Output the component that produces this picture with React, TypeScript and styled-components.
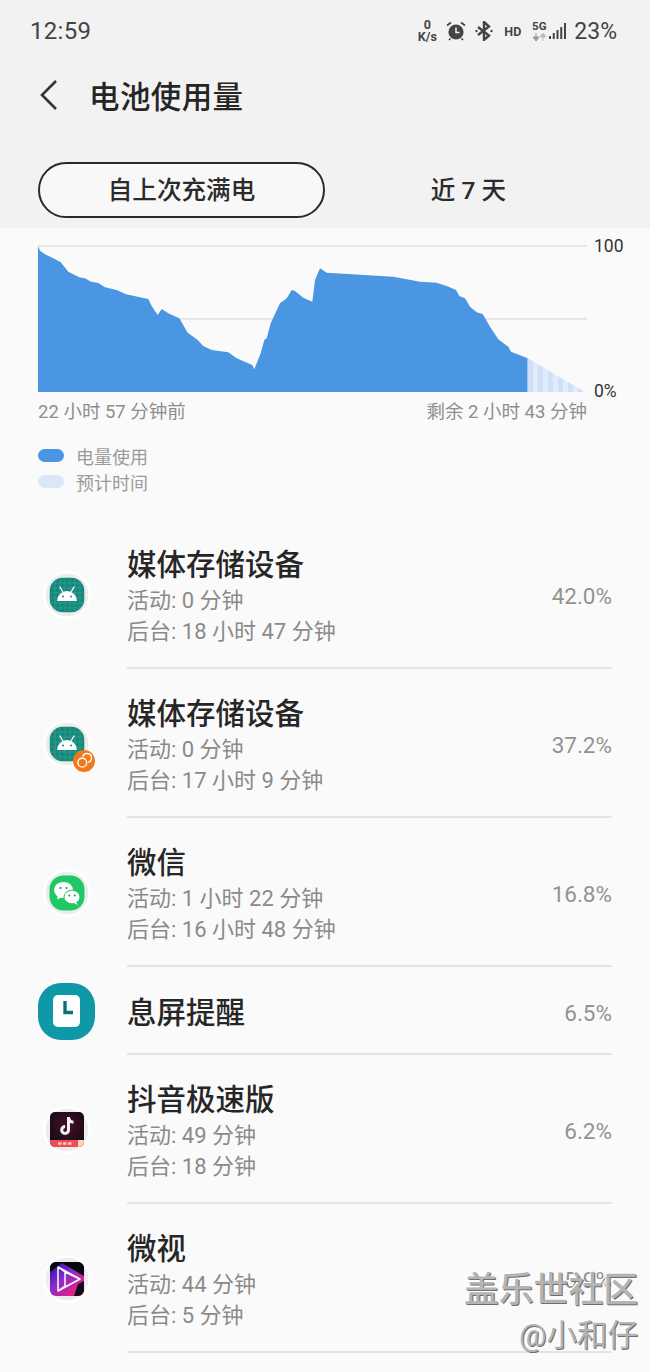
import React from 'react';
import styled, { createGlobalStyle } from 'styled-components';

const FONT = '"Roboto", "Noto Sans CJK SC", sans-serif';

const GlobalStyle = createGlobalStyle`
  html, body {
    margin: 0;
    padding: 0;
    background: #fafafa;
  }
  body {
    font-family: ${FONT};
  }
`;

const Page = styled.div`
  position: relative;
  width: 650px;
  height: 1372px;
  overflow: hidden;
  background: #fafafa;
`;

const Header = styled.header`
  height: 228px;
  background: #f2f2f2;
  display: flex;
  flex-direction: column;
`;

const StatusBar = styled.div`
  height: 62px;
  padding: 0 33px 0 30px;
  display: flex;
  align-items: center;
  justify-content: space-between;
  color: #444;
`;

const Clock = styled.span`
  font-size: 24px;
  letter-spacing: 0.3px;
`;

const StatusIcons = styled.div`
  display: flex;
  align-items: center;
`;

const Speed = styled.div`
  width: 22px;
  margin-right: 8px;
  font-size: 12.5px;
  line-height: 12.5px;
  font-weight: 700;
  text-align: center;
`;

const Alarm = styled.svg`
  width: 20px;
  height: 20px;
  margin-right: 8px;
`;

const Bluetooth = styled.svg`
  width: 20px;
  height: 20px;
`;

const HdLabel = styled.span`
  margin: 0 10px;
  font-size: 12.5px;
  font-weight: 700;
`;

const Network = styled.div`
  width: 16px;
  margin-right: 2px;
  font-size: 11.5px;
  line-height: 11.5px;
  font-weight: 700;
  display: flex;
  flex-direction: column;
  align-items: center;
`;

const Signal = styled.svg`
  width: 17px;
  height: 16px;
`;

const Battery = styled.span`
  margin-left: 8px;
  font-size: 23px;
`;

const TitleRow = styled.div`
  height: 68px;
  padding: 0 0 2px 38px;
  box-sizing: border-box;
  display: flex;
  align-items: center;
`;

const BackIcon = styled.svg`
  width: 24px;
  height: 34px;
`;

const Title = styled.h1`
  margin: 0 0 0 27px;
  font-size: 30.5px;
  font-weight: 500;
  letter-spacing: 0.4px;
  color: #252525;
`;

const Tabs = styled.div`
  margin-top: 32px;
  padding-left: 38px;
  display: flex;
`;

const Tab = styled.div<{ $active?: boolean }>`
  width: 287px;
  height: 56px;
  box-sizing: border-box;
  padding-bottom: 5px;
  border: 2px solid ${props => (props.$active ? '#2a2a2a' : 'transparent')};
  border-radius: 28px;
  background: ${props => (props.$active ? '#f8f8f8' : 'transparent')};
  color: #2b2b2b;
  font-size: 24.6px;
  font-weight: 500;
  display: flex;
  align-items: center;
  justify-content: center;
`;

const ChartSection = styled.section`
  padding: 17px 0 0 38px;
`;

const ChartRow = styled.div`
  display: flex;
`;

const ChartSvg = styled.svg`
  width: 549px;
  height: 148px;
  display: block;
`;

const Axis = styled.div`
  height: 165px;
  margin: -9px 0 0 7px;
  font-size: 17.5px;
  color: #333;
  display: flex;
  flex-direction: column;
  justify-content: space-between;
`;

const TimeRow = styled.div`
  width: 549px;
  margin-top: -1px;
  font-size: 18.5px;
  line-height: 24px;
  color: #8e8e8e;
  display: flex;
  justify-content: space-between;
`;

const Legend = styled.div`
  margin-top: 19px;
  display: flex;
  flex-direction: column;
  gap: 1px;
`;

const LegendRow = styled.div`
  height: 25px;
  font-size: 18px;
  color: #9a9a9a;
  display: flex;
  align-items: center;
`;

const Swatch = styled.span<{ $color: string }>`
  width: 26px;
  height: 13px;
  margin-right: 12px;
  border-radius: 6.5px;
  background: ${props => props.$color};
`;

const List = styled.div`
  margin-top: 26px;
`;

const Row = styled.div<{ $compact?: boolean }>`
  height: ${props => (props.$compact ? 88 : 149)}px;
  padding-left: 38px;
  display: flex;
`;

const IconSlot = styled.div`
  position: relative;
  width: 57px;
  margin-right: 32px;
  display: flex;
  align-items: center;
  justify-content: center;
`;

const RowBody = styled.div`
  width: 485px;
  box-sizing: border-box;
  padding-top: 5px;
  border-bottom: 2px solid #e4e4e4;
  display: flex;
  align-items: center;
  justify-content: space-between;
`;

const AppName = styled.div`
  font-size: 29.5px;
  line-height: 40px;
  font-weight: 500;
  color: #262626;
`;

const Usage = styled.div`
  font-size: 22px;
  line-height: 31.5px;
  color: #8a8a8a;
`;

const Percent = styled.span`
  font-size: 22.5px;
  color: #929292;
`;

const WatermarkBox = styled.div`
  position: absolute;
  right: 12px;
  top: 1267px;
  text-align: right;
  color: #b4b4b4;
  text-shadow: 1px 1px 0 #6f6f6f, -1px -1px 0 #fff;
`;

const WatermarkTitle = styled.div`
  font-size: 34.8px;
  line-height: 46px;
  font-weight: 500;
`;

const WatermarkUser = styled.div`
  font-size: 30.5px;
  line-height: 46px;
`;

const Badge = styled.svg`
  position: absolute;
  left: 35px;
  top: 81px;
  width: 22px;
  height: 22px;
`;

const batteryCurve =
  '0,0 2,4.7 7,8.3 15.3,12.3 22.7,16.3 30.3,25.7 41.3,31.3 47,32.3 53,35.7 60.3,37 67,41.3 78.7,44 88,48.3 ' +
  '110.3,53 113.7,60 119.7,69 123.7,63 130.3,67.3 141.3,72.3 149.7,86.7 159.7,94 165.3,100 173.7,104 190.3,106.3 ' +
  '198.7,112.3 214.3,119 216.3,123.3 222.7,107.3 226.3,94 228.7,92.3 232.7,77.3 242,57.3 248.7,52.3 253.7,44 257,45 ' +
  '265.3,51.7 274.3,55.7 277,34 282,22.3 288.7,26.7 355.3,30.7 382,35.7 398.7,36.7 408.7,40 418,44 421.3,50 427,52.3 ' +
  '432,60.7 438.7,66.3 444.7,68 452,80.7 460.3,93.3 470.3,100.7 473,105.7 489.7,112.3';

const BatteryChart: React.FC = () => (
  <ChartSvg viewBox="0 0 549 148">
    <defs>
      <pattern id="forecast" width="10" height="148" patternUnits="userSpaceOnUse" x="490">
        <rect width="5" height="148" fill="#cfe1f6" />
        <rect x="5" width="5" height="148" fill="#e0ecf9" />
      </pattern>
    </defs>
    <line x1="0" y1="1" x2="549" y2="1" stroke="#e6e6e6" strokeWidth="2" />
    <line x1="0" y1="74" x2="549" y2="74" stroke="#e6e6e6" strokeWidth="2" />
    <g transform="translate(0 1)">
      <polygon points={`${batteryCurve} 489.7,146 0,146`} fill="#4a96e3" />
      <polygon points="489.7,112.3 547,146 489.7,146" fill="url(#forecast)" />
    </g>
  </ChartSvg>
);

// Circular plate that sits behind the smaller launcher icons
const Plate: React.FC<{ children: React.ReactNode }> = ({ children }) => (
  <svg width="50" height="50" viewBox="0 0 50 50">
    <circle cx="25" cy="25" r="24" fill="#ffffff" />
    <circle cx="25" cy="25" r="21.5" fill="#eceeee" />
    {children}
  </svg>
);

const AndroidIcon: React.FC<{ clipId: string }> = ({ clipId }) => {
  const grid = [13, 18, 23, 28, 33, 38];
  return (
    <Plate>
      <clipPath id={clipId}>
        <rect x="7.5" y="7.5" width="35" height="35" rx="14" />
      </clipPath>
      <g clipPath={`url(#${clipId})`}>
        <rect x="7.5" y="7.5" width="35" height="35" fill="#13897b" />
        {grid.map(v => (
          <React.Fragment key={v}>
            <line x1={v} y1="7" x2={v} y2="43" stroke="#3fa195" strokeWidth="0.6" />
            <line x1="7" y1={v} x2="43" y2={v} stroke="#3fa195" strokeWidth="0.6" />
          </React.Fragment>
        ))}
      </g>
      <path d="M15 31a10 10 0 0 1 20 0z" fill="#fff" />
      <path d="M18 17l2.6 4.5M32 17l-2.6 4.5" stroke="#fff" strokeWidth="1.3" strokeLinecap="round" />
      <circle cx="21" cy="26.5" r="1" fill="#13897b" />
      <circle cx="29" cy="26.5" r="1" fill="#13897b" />
    </Plate>
  );
};

const WeChatIcon: React.FC = () => (
  <Plate>
    <rect x="7.5" y="7.5" width="35" height="35" rx="14" fill="#1fc866" />
    <ellipse cx="21.5" cy="22" rx="9.5" ry="8" fill="#fff" />
    <path d="M16 27l-1 4.5 5-2.5z" fill="#fff" />
    <ellipse cx="30" cy="29" rx="8" ry="6.8" fill="#fff" stroke="#1fc866" strokeWidth="1" />
    <path d="M34 34l2 3-4.5-2z" fill="#fff" />
    <circle cx="18.5" cy="20" r="1.1" fill="#1d8a55" />
    <circle cx="24.5" cy="20" r="1.1" fill="#1d8a55" />
    <circle cx="27.3" cy="27.5" r="0.95" fill="#1d8a55" />
    <circle cx="32.7" cy="27.5" r="0.95" fill="#1d8a55" />
  </Plate>
);

const ClockIcon: React.FC = () => (
  <svg width="57" height="57" viewBox="0 0 57 57">
    <rect width="57" height="57" rx="23" fill="#0f99a6" />
    <rect x="15" y="12" width="27" height="32" rx="5" fill="#fff" />
    <path d="M27 18v11.5h8" fill="none" stroke="#0e6f79" strokeWidth="3.4" />
  </svg>
);

const TikTokIcon: React.FC = () => (
  <Plate>
    <defs>
      <radialGradient id="ttBack" cx="50%" cy="40%" r="65%">
        <stop offset="0%" stopColor="#4a0f2a" />
        <stop offset="100%" stopColor="#140a12" />
      </radialGradient>
    </defs>
    <rect x="8" y="7" width="34" height="35" rx="5" fill="url(#ttBack)" />
    <path d="M8 35h34v2a5 5 0 0 1-5 5H13a5 5 0 0 1-5-5z" fill="#ee4d55" />
    <path d="M36 35h6v2a5 5 0 0 1-5 5h-1z" fill="#f9d3b4" />
    <path
      d="M26.5 12v13a3.4 3.4 0 1 1-3.4-3.4M26.5 12.5c.4 2.8 2.2 4.5 5 4.8"
      fill="none"
      stroke="#f3f3f3"
      strokeWidth="3"
    />
    <path d="M16 38.5h15" stroke="#f7c9c0" strokeWidth="2.6" strokeDasharray="3.5 1.5" />
  </Plate>
);

const WeishiIcon: React.FC = () => (
  <Plate>
    <defs>
      <linearGradient id="wsBack" x1="0" y1="0.2" x2="0.7" y2="1">
        <stop offset="0%" stopColor="#3516a8" />
        <stop offset="45%" stopColor="#8b2bd0" />
        <stop offset="100%" stopColor="#f01f7c" />
      </linearGradient>
    </defs>
    <rect x="8" y="8" width="34" height="34" rx="6" fill="url(#wsBack)" />
    <path d="M8 14a6 6 0 0 1 6-6h22a6 6 0 0 1 6 6v8L20 9 8 18z" fill="#07060c" />
    <path d="M36 30l6-3v9a6 6 0 0 1-6 6h-4z" fill="#12091a" />
    <path
      d="M16 13v24l22-12zM16 13l7 5v14l-7 5M23 18l15 7"
      fill="none"
      stroke="#fff"
      strokeWidth="1.5"
      strokeLinejoin="round"
    />
  </Plate>
);

const CloneBadge: React.FC = () => (
  <Badge viewBox="0 0 22 22">
    <circle cx="11" cy="11" r="11" fill="#ee7a1c" />
    <circle cx="9.3" cy="12.7" r="4.4" fill="none" stroke="#fff" strokeWidth="1.4" />
    <path d="M9.8 6.9a4.4 4.4 0 1 1 5.3 5.3" fill="none" stroke="#fff" strokeWidth="1.4" />
  </Badge>
);

interface AppUsage {
  name: string;
  percent: string;
  active?: string;
  background?: string;
  icon: React.ReactNode;
  badge?: boolean;
}

const APPS: AppUsage[] = [
  { name: '媒体存储设备', percent: '42.0%', active: '0 分钟', background: '18 小时 47 分钟', icon: <AndroidIcon clipId="androidA" /> },
  { name: '媒体存储设备', percent: '37.2%', active: '0 分钟', background: '17 小时 9 分钟', icon: <AndroidIcon clipId="androidB" />, badge: true },
  { name: '微信', percent: '16.8%', active: '1 小时 22 分钟', background: '16 小时 48 分钟', icon: <WeChatIcon /> },
  { name: '息屏提醒', percent: '6.5%', icon: <ClockIcon /> },
  { name: '抖音极速版', percent: '6.2%', active: '49 分钟', background: '18 分钟', icon: <TikTokIcon /> },
  { name: '微视', percent: '5.9%', active: '44 分钟', background: '5 分钟', icon: <WeishiIcon /> },
];

const App: React.FC = () => (
  <Page>
    <GlobalStyle />
    <Header>
      <StatusBar>
        <Clock>12:59</Clock>
        <StatusIcons>
          <Speed>
            0
            <br />
            K/s
          </Speed>
          <Alarm viewBox="0 0 20 20">
            <circle cx="10" cy="11" r="7.6" fill="#444" />
            <path d="M10 6.5V11.5H13.5" fill="none" stroke="#f2f2f2" strokeWidth="1.5" />
            <path d="M1 4.5 5 1.5M19 4.5 15 1.5M4.5 17.5 3 19M15.5 17.5 17 19" stroke="#444" strokeWidth="1.7" />
          </Alarm>
          <Bluetooth viewBox="0 0 20 20">
            <path d="M4 6 15 14.5 10 19V1l5 4.5L4 14" fill="none" stroke="#444" strokeWidth="2.4" />
            <circle cx="2.5" cy="10" r="1.2" fill="#444" />
            <circle cx="17.5" cy="10" r="1.2" fill="#444" />
          </Bluetooth>
          <HdLabel>HD</HdLabel>
          <Network>
            5G
            <svg width="15" height="8" viewBox="0 0 15 8">
              <path d="M4 0v5M1 4l3 4 3-4z" stroke="#999" fill="#999" strokeWidth="1" />
              <path d="M11 8V3M8 4l3-4 3 4z" stroke="#bbb" fill="#bbb" strokeWidth="1" />
            </svg>
          </Network>
          <Signal viewBox="0 0 17 16">
            <path d="M1 13v3M4.75 10v6M8.5 7v9M12.25 4v12M16 0v16" stroke="#444" strokeWidth="2" />
          </Signal>
          <Battery>23%</Battery>
        </StatusIcons>
      </StatusBar>
      <TitleRow>
        <BackIcon viewBox="0 0 24 34">
          <path d="M18 3 4 17l14 14" fill="none" stroke="#333" strokeWidth="2.6" />
        </BackIcon>
        <Title>电池使用量</Title>
      </TitleRow>
      <Tabs>
        <Tab $active>自上次充满电</Tab>
        <Tab>近 7 天</Tab>
      </Tabs>
    </Header>

    <ChartSection>
      <ChartRow>
        <BatteryChart />
        <Axis>
          <span>100</span>
          <span>0%</span>
        </Axis>
      </ChartRow>
      <TimeRow>
        <span>22 小时 57 分钟前</span>
        <span>剩余 2 小时 43 分钟</span>
      </TimeRow>
      <Legend>
        <LegendRow>
          <Swatch $color="#4a96e3" />
          电量使用
        </LegendRow>
        <LegendRow>
          <Swatch $color="#dbe7f9" />
          预计时间
        </LegendRow>
      </Legend>
    </ChartSection>

    <List>
      {APPS.map((app, i) => (
        <Row key={i} $compact={!app.active}>
          <IconSlot>
            {app.icon}
            {app.badge && <CloneBadge />}
          </IconSlot>
          <RowBody>
            <div>
              <AppName>{app.name}</AppName>
              {app.active && <Usage>活动: {app.active}</Usage>}
              {app.background && <Usage>后台: {app.background}</Usage>}
            </div>
            <Percent>{app.percent}</Percent>
          </RowBody>
        </Row>
      ))}
    </List>

    <WatermarkBox>
      <WatermarkTitle>盖乐世社区</WatermarkTitle>
      <WatermarkUser>@小和仔</WatermarkUser>
    </WatermarkBox>
  </Page>
);

export default App;
